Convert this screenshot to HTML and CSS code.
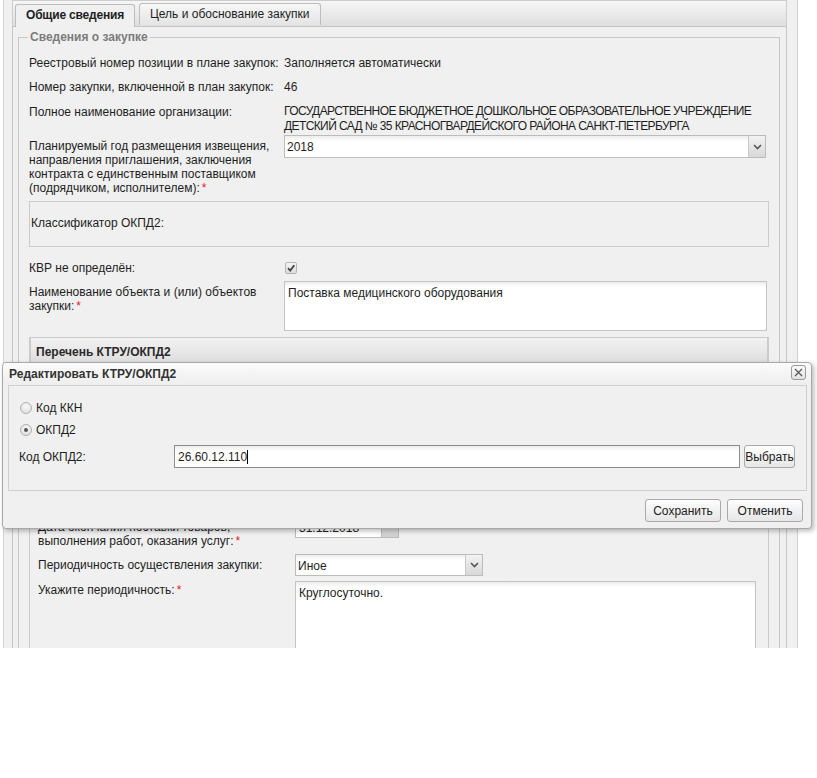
FILE: index.html
```html
<!DOCTYPE html>
<html lang="ru">
<head>
<meta charset="utf-8">
<title>Сведения о закупке</title>
<link rel="stylesheet" href="styles.css">
</head>
<body>
<div class="screen">
  <div class="window">
    <div class="tabs">
      <div class="tab active">Общие сведения</div>
      <div class="tab">Цель и обоснование закупки</div>
    </div>
    <div class="tab-body">
      <fieldset class="group">
        <legend>Сведения о закупке</legend>
        <div class="row r1"><div class="lbl">Реестровый номер позиции в плане закупок:</div><div class="val">Заполняется автоматически</div></div>
        <div class="row r2"><div class="lbl">Номер закупки, включенной в план закупок:</div><div class="val">46</div></div>
        <div class="row r3"><div class="lbl pad1">Полное наименование организации:</div><div class="val org">ГОСУДАРСТВЕННОЕ БЮДЖЕТНОЕ ДОШКОЛЬНОЕ ОБРАЗОВАТЕЛЬНОЕ УЧРЕЖДЕНИЕ<br>ДЕТСКИЙ САД № 35 КРАСНОГВАРДЕЙСКОГО РАЙОНА САНКТ-ПЕТЕРБУРГА</div></div>
        <div class="row r4">
          <div class="lbl pad4">Планируемый год размещения извещения, направления приглашения, заключения контракта с единственным поставщиком (подрядчиком, исполнителем):<span class="req">*</span></div>
          <div class="combo year"><span class="combo-text">2018</span><span class="combo-btn"><svg width="9" height="6" viewBox="0 0 9 6"><path d="M1 1 L4.5 4.5 L8 1" fill="none" stroke="#555" stroke-width="1.6"/></svg></span></div>
        </div>
        <div class="okpd-box">Классификатор ОКПД2:</div>
        <div class="row r5"><div class="lbl">КВР не определён:</div>
          <span class="check"><svg width="10" height="10" viewBox="0 0 10 10"><path d="M2 5.2 L4.2 7.6 L8.3 2.2" fill="none" stroke="#444" stroke-width="1.8"/></svg></span>
        </div>
        <div class="row r6"><div class="lbl pad4">Наименование объекта и (или) объектов закупки:<span class="req">*</span></div>
          <div class="textarea name">Поставка медицинского оборудования</div>
        </div>
        <div class="ktru">
          <div class="ktru-head">Перечень КТРУ/ОКПД2</div>
          <div class="ktru-grid"></div>
          <div class="row r7"><div class="lbl2 pad4">Дата окончания поставки товаров, выполнения работ, оказания услуг:<span class="req">*</span></div>
            <div class="date"><span class="date-text">31.12.2018</span><span class="date-btn"></span></div>
          </div>
          <div class="row r8"><div class="lbl2 pad4">Периодичность осуществления закупки:</div>
            <div class="combo period"><span class="combo-text">Иное</span><span class="combo-btn"><svg width="9" height="6" viewBox="0 0 9 6"><path d="M1 1 L4.5 4.5 L8 1" fill="none" stroke="#555" stroke-width="1.6"/></svg></span></div>
          </div>
          <div class="row r9"><div class="lbl2 pad2">Укажите периодичность:<span class="req">*</span></div>
            <div class="textarea period-text">Круглосуточно.</div>
          </div>
        </div>
      </fieldset>
    </div>
  </div>

  <div class="dialog">
    <div class="dlg-title">Редактировать КТРУ/ОКПД2
      <span class="dlg-close"><svg width="9" height="9" viewBox="0 0 9 9"><path d="M1 1 L8 8 M8 1 L1 8" stroke="#555" stroke-width="1.2"/></svg></span>
    </div>
    <div class="dlg-panel">
      <div class="radio-row"><span class="radio"></span>Код ККН</div>
      <div class="radio-row"><span class="radio on"></span>ОКПД2</div>
      <div class="code-row">
        <div class="code-lbl">Код ОКПД2:</div>
        <div class="input code">26.60.12.110<span class="caret"></span></div>
        <button class="btn pick">Выбрать</button>
      </div>
    </div>
    <div class="dlg-foot">
      <button class="btn foot">Сохранить</button>
      <button class="btn foot">Отменить</button>
    </div>
  </div>
</div>
</body>
</html>
```
FILE: styles.css
```css
* { box-sizing: border-box; }
html, body { margin: 0; padding: 0; background: #fff; }
body {
  font-family: "Liberation Sans", Arial, sans-serif;
  font-size: 12px;
  color: #1e1e1e;
  line-height: 14px;
}
.screen { position: relative; width: 817px; height: 778px; }

.window {
  margin-left: 3px;
  width: 795px;
  height: 648px;
  overflow: hidden;
  background: #f0f0f0;
  border-left: 1px solid #d6d6d6;
  border-right: 1px solid #cfcfcf;
  padding: 0 10px 0 8px;
}

/* tabs */
.tabs {
  height: 27px;
  display: flex;
  align-items: flex-end;
  gap: 4px;
  padding-left: 2px;
  background: linear-gradient(#f6f6f6, #dedede);
  border: 1px solid #cdcdcd;
  border-bottom: 1px solid #c4c4c4;
}
.tab {
  height: 22px;
  padding: 0 10px;
  line-height: 20px;
  border: 1px solid #bdbdbd;
  border-bottom: none;
  border-radius: 3px 3px 0 0;
  background: linear-gradient(#f7f7f7, #e4e4e4);
  margin-bottom: 1px;
}
.tab.active {
  font-weight: bold;
  background: #f0f0f0;
  height: 23px;
  margin-bottom: -1px;
  position: relative;
  letter-spacing: -0.2px;
}
.tab-body {
  border: 1px solid #c6c6c6;
  border-top: none;
  height: 640px;
  padding-top: 1px;
}

/* fieldset */
.group {
  margin: 2px 6px 0 5px;
  padding: 0 10px 0 10px;
  border: 1px solid #c8c8c8;
  min-width: 0;
}
.group legend {
  font-weight: bold;
  color: #7c7c7c;
  padding: 0 2px;
  margin-left: -1px;
  line-height: 14px;
}
.row { display: flex; align-items: flex-start; }
.lbl { width: 255px; flex: none; }
.lbl2 { width: 257px; flex: none; }
.pad1 { padding-top: 1px; }
.pad2 { padding-top: 2px; }
.pad4 { padding-top: 4px; }
.req { color: #e02020; margin-left: 2px; }
.val { flex: 1; }
.org { line-height: 15px; white-space: nowrap; letter-spacing: -0.6px; }

.r1 { margin-top: 12px; }
.r2 { margin-top: 10px; }
.r3 { margin-top: 10px; }
.r4 { margin-top: 1px; }
.r5 { margin-top: 14px; }
.r6 { margin-top: 6px; }

.combo {
  display: flex;
  height: 23px;
  border: 1px solid #bcbcbc;
  background: linear-gradient(#ececec, #fff 5px);
}
.combo-text { flex: 1; padding: 4px 0 0 2px; }
.combo-btn {
  width: 17px;
  border-left: 1px solid #c8c8c8;
  background: linear-gradient(#f2f2f2, #d8d8d8);
  display: flex;
  align-items: center;
  justify-content: center;
}
.year { width: 482px; }
.period { width: 188px; height: 22px; }

.okpd-box {
  margin-top: 6px;
  height: 46px;
  border: 1px solid #cbcbcb;
  padding: 14px 0 0 1px;
}

.check {
  margin-top: 1px;
  margin-left: 1px;
  width: 12px;
  height: 12px;
  border: 1px solid #b5b5b5;
  border-radius: 2px;
  background: linear-gradient(#f4f4f4, #dcdcdc);
  display: flex;
  align-items: center;
  justify-content: center;
}

.textarea {
  border: 1px solid #c4c4c4;
  background: linear-gradient(#ececec, #fff 5px);
  padding: 4px 0 0 3px;
}
.name { width: 483px; height: 50px; }

.ktru {
  margin-top: 6px;
  border: 1px solid #cbcbcb;
  border-top: none;
  padding: 0 10px 0 8px;
  margin-bottom: 20px;
}
.ktru-head {
  margin: 0 -10px 0 -8px;
  height: 28px;
  border: 1px solid #cbcbcb;
  border-bottom: none;
  background: linear-gradient(#f2f2f2, #dcdcdc);
  font-weight: bold;
  padding: 7px 0 0 5px;
  color: #2a2a2a;
}
.ktru-grid { height: 151px; }
.r7 { margin-top: 0; }
.date {
  display: flex;
  height: 22px;
}
.date-text {
  width: 87px;
  border: 1px solid #bcbcbc;
  background: linear-gradient(#ececec, #fff 5px);
  padding: 4px 0 0 3px;
}
.date-btn {
  width: 17px;
  border: 1px solid #bcbcbc;
  border-left: none;
  background: linear-gradient(#ececec, #d0d0d0);
}
.r8 { margin-top: 6px; }
.r9 { margin-top: 5px; }
.period-text { width: 461px; height: 80px; }

/* dialog */
.dialog {
  position: absolute;
  left: 2px;
  top: 362px;
  width: 810px;
  height: 167px;
  border: 1px solid #a8a8a8;
  border-radius: 4px;
  background: #f0f0f0;
  box-shadow: 2px 2px 5px rgba(0,0,0,0.28);
  padding: 0 4px 0 5px;
}
.dlg-title {
  position: relative;
  height: 22px;
  margin: 0 -4px 0 -5px;
  padding: 4px 0 0 6px;
  font-weight: bold;
  color: #333;
  background: linear-gradient(#fbfbfb, #eeeeee);
  border-radius: 4px 4px 0 0;
}
.dlg-close {
  position: absolute;
  right: 5px;
  top: 2px;
  width: 15px;
  height: 15px;
  border: 1px solid #9a9a9a;
  border-radius: 3px;
  background: linear-gradient(#fafafa, #e2e2e2);
  display: flex;
  align-items: center;
  justify-content: center;
}
.dlg-panel {
  height: 106px;
  border: 1px solid #cfcfcf;
  padding: 15px 0 0 11px;
}
.radio-row {
  display: flex;
  align-items: center;
  height: 14px;
  margin-bottom: 8px;
  gap: 4px;
}
.radio {
  width: 12px;
  height: 12px;
  border-radius: 50%;
  border: 1px solid #b0b0b0;
  background: radial-gradient(circle at 50% 35%, #fafafa, #d8d8d8);
  display: flex;
  align-items: center;
  justify-content: center;
}
.radio.on::after {
  content: "";
  width: 4px;
  height: 4px;
  border-radius: 50%;
  background: #555;
}
.code-row {
  display: flex;
  align-items: center;
  margin-left: -1px;
}
.code-lbl { width: 155px; flex: none; }
.input {
  height: 23px;
  border: 1px solid #8c8c8c;
  background: linear-gradient(#ececec, #fff 5px);
  padding: 4px 0 0 3px;
  display: flex;
  align-items: flex-start;
}
.code { width: 566px; }
.caret { width: 1px; height: 14px; background: #000; }
.btn {
  font: inherit;
  color: #222;
  height: 23px;
  border: 1px solid #a9a9a9;
  border-radius: 3px;
  background: linear-gradient(#fefefe, #e6e6e6);
  padding: 0;
  cursor: default;
}
.pick { width: 51px; margin-left: 4px; }
.dlg-foot {
  display: flex;
  justify-content: flex-end;
  gap: 6px;
  padding: 8px 4px 0 0;
}
.foot { width: 76px; }
```
